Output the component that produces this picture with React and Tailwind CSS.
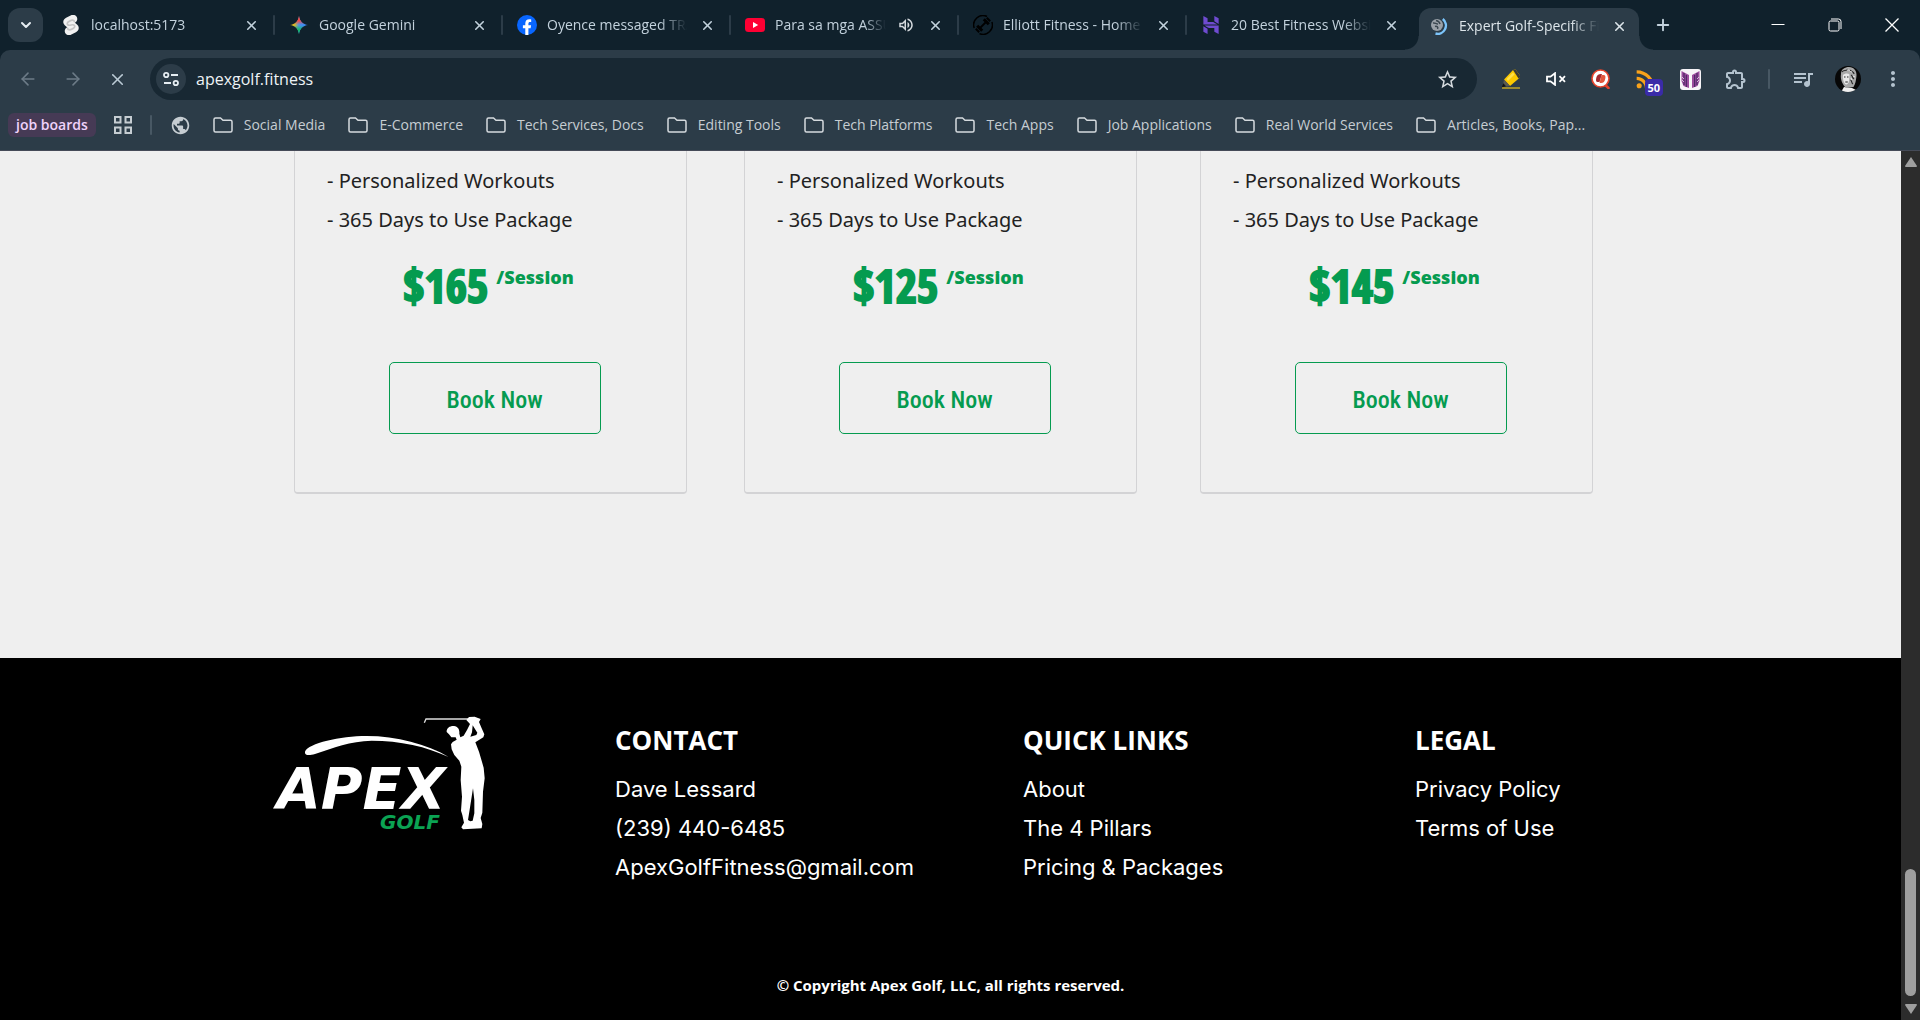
import React from 'react';
import { SiHostinger } from 'react-icons/si';
import { MdStarBorder, MdOutlineExtension, MdQueueMusic, MdPublic, MdMoreVert, MdRssFeed, MdOutlineVolumeUp } from 'react-icons/md';
import { ArrowLeft, ArrowRight, X, Plus, ChevronDown } from 'lucide-react';

const SvelteIcon = () => (
  <svg viewBox="0 0 18 20" className="h-5 w-[18px]" fill="none" strokeLinecap="round" aria-hidden="true">
    <path d="M6 6.500L11 4M7 16L12 13.500M5.500 7L12.500 13" stroke="#f1f1f1" strokeWidth="8.500" />
    <path d="M12.500 6.500C11.500 4.500 9.500 4.800 6.500 6.800C4 8.500 5.500 11 9 10C12.500 9 14 11.500 11.500 13.200C8.500 15.200 6.500 15.500 5.500 13.500" stroke="#c4c4c4" strokeWidth="1.700" />
  </svg>
);

const GeminiIcon = () => (
  <svg viewBox="0 0 18 18" className="size-[18px]" aria-hidden="true">
    <defs>
      <linearGradient id="gem" x1="0" y1="0.45" x2="1" y2="0.55">
        <stop offset="0" stopColor="#fbbc04" />
        <stop offset="0.25" stopColor="#d9bd2c" />
        <stop offset="0.5" stopColor="#4a90e8" />
        <stop offset="1" stopColor="#3186ff" />
      </linearGradient>
      <linearGradient id="gemv" x1="0" y1="0" x2="0" y2="1">
        <stop offset="0" stopColor="#ff4641" />
        <stop offset="0.25" stopColor="#ff4641" />
        <stop offset="0.48" stopColor="#ff4641" stopOpacity="0" />
        <stop offset="0.52" stopColor="#14bb69" stopOpacity="0" />
        <stop offset="0.75" stopColor="#14bb69" />
      </linearGradient>
    </defs>
    <path d="M9 0C9.600 5 13 8.400 18 9C13 9.600 9.600 13 9 18C8.400 13 5 9.600 0 9C5 8.400 8.400 5 9 0Z" fill="url(#gem)" />
    <path d="M9 0C9.600 5 13 8.400 18 9C13 9.600 9.600 13 9 18C8.400 13 5 9.600 0 9C5 8.400 8.400 5 9 0Z" fill="url(#gemv)" />
  </svg>
);

const FacebookIcon = () => (
  <svg viewBox="0 0 20 20" className="size-5" aria-hidden="true">
    <circle cx="10" cy="10" r="10" fill="#0866ff" />
    <path d="M8.300 20V13.200H5.900V10.200H8.300V8.600C8.300 5.700 9.700 4.200 12.400 4.200C13 4.200 13.800 4.300 14.200 4.400V7C13.900 6.950 13.400 6.950 13 6.950C11.900 6.950 11.400 7.400 11.400 8.700V10.200H14.100L13.600 13.200H11.400V20Z" fill="#fff" />
  </svg>
);

const YoutubeIcon = () => (
  <svg viewBox="0 0 20 14" className="h-3.5 w-5" aria-hidden="true">
    <rect width="20" height="14" rx="3.500" fill="#ff0033" />
    <path d="M8 4L13.200 7L8 10Z" fill="#fff" />
  </svg>
);

const DumbbellIcon = () => (
  <svg viewBox="0 0 20 20" className="size-5" fill="none" stroke="#000" aria-hidden="true">
    <path d="M14 1.500A9.300 9.300 0 0 0 1.200 13M18.900 7A9.300 9.300 0 0 1 6.500 18.600" strokeWidth="1.500" />
    <path d="M6.500 13.500L13.500 6.500" strokeWidth="1.800" />
    <path d="M4.200 10.800L9.200 15.800M10.800 4.200L15.800 9.200" strokeWidth="3" />
    <path d="M2.800 13.800L6.200 17.200M13.800 2.800L17.200 6.200" strokeWidth="2" />
  </svg>
);

const LoadingIcon = () => (
  <svg viewBox="0 0 18 18" className="size-[18px]" aria-hidden="true">
    <circle cx="7" cy="8" r="6" fill="#9aa1a8" />
    <path d="M3 6C5 5.500 6 7 8 7M6 3.500C8 4 9.500 4.500 10 7M5 9.500C7 9 8.500 10 7.500 12" stroke="#3a464f" strokeWidth="1.500" fill="none" />
    <path d="M12.800 2A8.300 8.300 0 0 1 5.500 16.500" stroke="#7cc4fa" strokeWidth="2.400" fill="none" />
  </svg>
);

const TABS = [
  { title: 'localhost:5173', icon: <SvelteIcon />, sep: true },
  { title: 'Google Gemini', icon: <GeminiIcon />, sep: true },
  { title: 'Oyence messaged TRAINING', icon: <FacebookIcon />, sep: true },
  { title: 'Para sa mga ASSUMERA', icon: <YoutubeIcon />, sep: true, audio: true },
  { title: 'Elliott Fitness - Home Page', icon: <DumbbellIcon />, sep: true },
  { title: '20 Best Fitness Website', icon: <SiHostinger className="size-[18px] text-[#6f4bd0]" /> },
];

const BOOKMARKS = [
  'Social Media', 'E-Commerce', 'Tech Services, Docs', 'Editing Tools', 'Tech Platforms',
  'Tech Apps', 'Job Applications', 'Real World Services', 'Articles, Books, Pap...',
];

function TabBody({ title, icon, audio }) {
  return (
    <>
      <span className="flex w-[18px] shrink-0 items-center justify-center [&>svg]:shrink-0">{icon}</span>
      <span className="min-w-0 flex-1 overflow-hidden whitespace-nowrap text-left [mask-image:linear-gradient(to_right,#000_80%,transparent)]">{title}</span>
      {audio && <MdOutlineVolumeUp className="size-[18px] shrink-0 text-[#d5dade]" />}
      <button type="button" aria-label={`Close ${title}`} className="flex w-[18px] shrink-0 justify-center">
        <X className="size-[15px]" strokeWidth={2.500} />
      </button>
    </>
  );
}

function TabStrip() {
  return (
    <div className="flex h-[50px] bg-[#10212c] text-sm text-[#c3d2dd]">
      <button type="button" aria-label="Search tabs" className="mt-2 ml-2 flex h-[34px] w-[35px] shrink-0 items-center justify-center rounded-xl bg-[#2c3c48] text-[#e6edf2]">
        <ChevronDown className="size-4" strokeWidth={3} />
      </button>
      <div className="ml-1 grid min-w-0 max-w-[1596px] flex-1 grid-cols-7">
        {TABS.map((t) => (
          <div key={t.title} className="flex min-w-0 items-center">
            <div className="flex min-w-0 flex-1 items-center gap-[11px] pl-[15px] pr-[13px]"><TabBody {...t} /></div>
            <span className={t.sep ? 'h-5 w-0.5 rounded bg-[#2c3c48]' : 'w-0.5'} />
          </div>
        ))}
        <div className="flex min-w-0 items-end px-1">
          <div className="relative flex h-[42px] min-w-0 flex-1 items-center gap-[11px] rounded-t-xl bg-[#2c3c48] px-[11px] pb-1.5 text-[#dde5ea]">
            <span className="absolute -left-3.5 bottom-0 size-3.5 bg-[radial-gradient(circle_at_0_0,transparent_13px,#2c3c48_14px)]" />
            <span className="absolute -right-3.5 bottom-0 size-3.5 bg-[radial-gradient(circle_at_100%_0,transparent_13px,#2c3c48_14px)]" />
            <TabBody title="Expert Golf-Specific Fitness" icon={<LoadingIcon />} />
          </div>
        </div>
      </div>
      <button type="button" aria-label="New tab" className="ml-2 flex w-6 shrink-0 items-center justify-center">
        <Plus className="size-[18px]" strokeWidth={2.500} />
      </button>
      <div className="ml-auto flex shrink-0 text-white">
        <button type="button" aria-label="Minimize" className="flex w-[57px] items-center justify-center">
          <svg viewBox="0 0 14 14" className="size-3.5" stroke="currentColor"><path d="M0.500 6.500H13.500" /></svg>
        </button>
        <button type="button" aria-label="Restore" className="flex w-[57px] items-center justify-center">
          <svg viewBox="0 0 14 14" className="size-3.5" fill="none" stroke="currentColor">
            <rect x="1" y="3" width="10" height="10" rx="1.500" />
            <path d="M3 1H10.500A2.500 2.500 0 0 1 13 3.500V11" />
          </svg>
        </button>
        <button type="button" aria-label="Close window" className="flex w-[57px] items-center justify-center">
          <svg viewBox="0 0 14 14" className="size-3.5" stroke="currentColor" strokeWidth="1.300"><path d="M0.500 0.500L13.500 13.500M13.500 0.500L0.500 13.500" /></svg>
        </button>
      </div>
    </div>
  );
}

const ToolButton = ({ label, children }) => (
  <button type="button" aria-label={label} className="flex w-[45px] shrink-0 items-center justify-center">{children}</button>
);

function Toolbar() {
  return (
    <div className="flex h-[50px] rounded-t-[10px] bg-[#2c3c48] px-[5px] pt-2 text-[#b4c3cf]">
      <div className="flex shrink-0 text-[#6c7b87]">
        <ToolButton label="Back"><ArrowLeft className="size-5" strokeWidth={1.900} /></ToolButton>
        <ToolButton label="Forward"><ArrowRight className="size-5" strokeWidth={1.900} /></ToolButton>
        <ToolButton label="Stop loading"><X className="size-[19px] text-[#bccbd6]" strokeWidth={2} /></ToolButton>
      </div>
      <div className="ml-2.5 flex h-[42px] min-w-0 flex-1 items-center rounded-full bg-[#182833] pr-[18px] pl-1.5">
        <button type="button" aria-label="Site information" className="flex size-[30px] shrink-0 items-center justify-center rounded-full bg-[#2c3c48] text-[#e6edf2]">
          <svg viewBox="0 0 16 16" className="size-4" fill="none" stroke="currentColor" strokeWidth="1.800">
            <circle cx="3.200" cy="4" r="2.200" /><path d="M8 4H15M1 12H8" /><circle cx="12.800" cy="12" r="2.200" />
          </svg>
        </button>
        <input aria-label="Address" defaultValue="apexgolf.fitness" className="ml-2.5 min-w-0 flex-1 bg-transparent text-base text-[#eef3f6] outline-none" />
        <button type="button" aria-label="Bookmark this page"><MdStarBorder className="size-[23px] text-[#d5dade]" /></button>
      </div>
      <div className="ml-[11px] flex shrink-0">
        <ToolButton label="Highlighter">
          <svg viewBox="0 0 20 20" className="size-5">
            <path d="M1 19H19" stroke="#d9b521" strokeWidth="1.300" />
            <path d="M3 10.500L12 1L14.500 0.600L19 6.500V8.500L9 17Z" fill="#fcc900" />
            <path d="M12 1L14.500 0.600L19 6.500V8.500L17.500 9.500Z" fill="#3a3a34" />
            <path d="M5.500 10L12 3.500L13.500 5.500L7 12Z" fill="#ffe04a" />
            <path d="M3 10.500L9 17L5.500 17.500L2.300 14Z" fill="#5c5a50" />
            <path d="M2.300 14.500L4.600 17.300L0.800 18.300Z" fill="#111" />
          </svg>
        </ToolButton>
        <ToolButton label="Mute tab">
          <svg viewBox="0 0 20 14" className="h-3.5 w-5" fill="none" stroke="#fff" strokeWidth="1.800">
            <path d="M1 4.700H4.500L9 1.200V12.800L4.500 9.300H1Z" /><path d="M13.500 4.200L19 9.800M19 4.200L13.500 9.800" />
          </svg>
        </ToolButton>
        <ToolButton label="Page search">
          <svg viewBox="0 0 20 20" className="size-5">
            <path d="M13 15L17.500 19" stroke="#e8442c" strokeWidth="2.600" strokeLinecap="round" />
            <circle cx="9.500" cy="9.500" r="8.500" fill="#fff" stroke="#e8442c" strokeWidth="1.600" />
            <path d="M5.500 8C6 6 8 5 9.800 5H11L8.500 13H6.500C5 13 4.500 11.500 5.500 8Z" fill="#a52a30" />
            <path d="M10.500 6H12.500C14.500 6 14.700 7.500 14.300 9.500C13.800 12.500 12.500 14 10 14H8.500Z" fill="#e4573c" />
          </svg>
        </ToolButton>
        <ToolButton label="Feed, 50 unread">
          <span className="relative flex size-6 items-center justify-center">
            <MdRssFeed className="size-7 shrink-0 text-[#f9a21a]" />
            <span className="absolute top-3 left-[11px] rounded bg-[#3a2ba8] px-[3px] text-[11px] leading-[17px] font-bold text-white">50</span>
          </span>
        </ToolButton>
        <ToolButton label="Reader">
          <svg viewBox="0 0 21 21" className="size-[21px]">
            <rect width="21" height="21" rx="3" fill="#f7f4f8" />
            <path d="M1.500 2L9 6V19L3.500 17L1.500 12Z" fill="#9a4a9c" /><path d="M19.500 2L12 6V19L17.500 17L19.500 12Z" fill="#9a4a9c" />
            <path d="M4 4V16M6.300 6V18M17 4V16M14.700 6V18" stroke="#42215e" strokeWidth="1.100" />
            <path d="M2 8L4 10M2 11L4 13M19 8L17 10M19 11L17 13" stroke="#f7f4f8" strokeWidth="0.700" />
          </svg>
        </ToolButton>
        <ToolButton label="Extensions"><MdOutlineExtension className="size-6" /></ToolButton>
        <span className="mx-2.5 h-5 w-0.5 self-center rounded bg-[#485864]" />
        <ToolButton label="Media controls"><MdQueueMusic className="size-6" /></ToolButton>
        <ToolButton label="Profile">
          <svg viewBox="0 0 26 26" className="size-[26px]">
            <defs><clipPath id="av"><circle cx="13" cy="13" r="13" /></clipPath></defs>
            <g clipPath="url(#av)">
              <rect width="26" height="26" fill="#070707" />
              <path d="M6 26L9 21L17 22L21 24V26Z" fill="#f0f0f0" />
              <path d="M6 8C6 3 10 1 14 1C19 1 22 5 21.500 10C21 14 20.500 18 18.500 21L11 22C8 19 5 14 6 8Z" fill="#a8a8a8" />
              <path d="M8 9C10 7 13 7 14.500 8.500L14 15C13.500 18 11.500 19 10 18C8.500 16 7.500 12 8 9Z" fill="#e8e8e8" />
              <path d="M7 6C9 3 11 6 13 3M15 4C16 6 19 5 19 8M16 9C18 10 17 12 19 13M15.500 14C17.500 15 16 17 18 18M9 11H10.500M12 11H13.500M10.300 16H12.800" stroke="#262626" strokeWidth="1.200" fill="none" />
              <path d="M12 4C14 3 15 6 17 6M18 10L20 11M16 12L17 14" stroke="#f2f2f2" strokeWidth="0.900" fill="none" />
            </g>
          </svg>
        </ToolButton>
        <ToolButton label="Menu"><MdMoreVert className="size-6" /></ToolButton>
      </div>
    </div>
  );
}

function BookmarksBar() {
  return (
    <div className="flex h-[51px] items-center border-b border-[#454a57] bg-[#2c3c48] pl-2 text-sm text-[#c6cdd2]">
      <button type="button" className="rounded-md bg-[#463a55] px-2 leading-6 font-semibold text-[#efd3fb]">job boards</button>
      <button type="button" aria-label="Apps" className="ml-[18px]">
        <svg viewBox="0 0 18 18" className="size-[18px]" fill="none" stroke="currentColor" strokeWidth="2">
          <rect x="1" y="1" width="5.500" height="5.500" /><rect x="11.500" y="1" width="5.500" height="5.500" />
          <rect x="1" y="11.500" width="5.500" height="5.500" /><rect x="11.500" y="11.500" width="5.500" height="5.500" />
        </svg>
      </button>
      <span className="ml-[18px] h-5 w-0.5 rounded bg-[#485864]" />
      <button type="button" aria-label="Web page" className="ml-[18px]"><MdPublic className="size-[21px]" /></button>
      <div className="ml-[22px] flex gap-[23px]">
        {BOOKMARKS.map((b) => (
          <button type="button" key={b} className="flex items-center gap-[11px] whitespace-nowrap">
            <svg viewBox="0 0 20 16" className="h-4 w-5" fill="none" stroke="#d5dade" strokeWidth="1.500">
              <path d="M1 13.500V2.500Q1 1 2.500 1H7.500L10 3.300H17.500Q19 3.300 19 4.800V13.500Q19 15 17.500 15H2.500Q1 15 1 13.500Z" />
            </svg>
            {b}
          </button>
        ))}
      </div>
    </div>
  );
}

const PriceCard = ({ price }) => (
  <article className="flex w-full max-w-[393px] flex-col rounded-b border border-t-0 border-b-2 border-[#d3d3d5] px-8 pt-2.5 pb-[58px]">
    <ul className="font-['Noto_Sans',sans-serif] text-xl leading-[39px] whitespace-nowrap text-[#222]">
      <li>- Personalized Workouts</li>
      <li>- 365 Days to Use Package</li>
    </ul>
    <p className="mt-4 flex items-start justify-center gap-2 pr-1 font-extrabold text-[#059b50]">
      <span className="font-['Open_Sans_Condensed','Open_Sans',sans-serif] text-[46px] leading-[60px] [-webkit-text-stroke:2px_#059b50]">{price}</span>
      <span className="text-lg leading-[44px]">/Session</span>
    </p>
    <button type="button" className="mt-[47px] ml-2 h-[72px] w-[212px] self-center rounded-[5px] border border-[#059b50] pt-1 font-['Roboto_Condensed',sans-serif] text-2xl font-medium text-[#059b50]">Book Now</button>
  </article>
);

const Logo = () => (
  <svg viewBox="0 0 720 420" className="h-[140px] w-[240px]" role="img" aria-label="Apex Golf">
    <path d="M135 155C145 130 240 108 320 108C410 108 500 132 566 171C500 140 420 122 335 122C270 124 220 143 165 162C145 168 133 166 135 155Z" fill="#fff" />
    <text x="50" y="328" className="font-['DejaVu_Sans',sans-serif] text-[171px] font-bold italic" fill="#fff">APEX</text>
    <text x="360" y="388" className="font-['DejaVu_Sans',sans-serif] text-[60px] font-bold italic" fill="#0ba353">GOLF</text>
    <path d="M493 68L498 57H625" stroke="#ddd" strokeWidth="4" fill="none" />
    <path d="M560 96C559 84 570 77 582 78C595 80 599 89 598 101L601 112L611 107L621 90L630 72L619 60L627 51L644 50L662 57L657 66L665 85L673 103L670 112L646 127L657 155L671 203L674 235L669 275L667 338L662 354L667 372L665 385L609 388L604 382L612 368L607 345L603 332L606 290L602 240L604 200L598 182L583 165L575 148L573 133L578 126L590 119L587 112L574 112L567 103Z" fill="#fff" />
    <path d="M638 76L652 98L649 105L631 110L636 97Z" fill="#000" />
    <path d="M639 265L643 300L643 340L638 362L631 364L624 360L628 335Z" fill="#000" />
  </svg>
);

const FooterColumn = ({ title, items }) => (
  <section className="pt-5">
    <h2 className="text-[26px] leading-10 font-bold">{title}</h2>
    <ul className="mt-2.5 font-['Inter',sans-serif] text-[22px] leading-[39px]">
      {items.map((i) => <li key={i}><a href="#top">{i}</a></li>)}
    </ul>
  </section>
);

export default function App() {
  return (
    <div id="top" className="flex min-h-screen flex-col font-['Open_Sans','Noto_Sans',sans-serif]">
      <header className="bg-[#10212c]">
        <TabStrip />
        <Toolbar />
        <BookmarksBar />
      </header>
      <div className="flex flex-1">
        <div className="flex min-w-0 flex-1 flex-col">
          <main className="grid flex-1 grid-cols-[450fr_456fr_393fr] items-start bg-[#efefef] pr-[308px] pb-40 pl-[294px]">
            {['$165', '$125', '$145'].map((p) => <PriceCard key={p} price={p} />)}
          </main>
          <footer className="bg-black pb-[23px] text-white">
            <div className="grid grid-cols-[355fr_408fr_392fr_226fr] pt-[42px] pr-[260px] pl-[260px]">
              <Logo />
              <FooterColumn title="CONTACT" items={['Dave Lessard', '(239) 440-6485', 'ApexGolfFitness@gmail.com']} />
              <FooterColumn title="QUICK LINKS" items={['About', 'The 4 Pillars', 'Pricing & Packages']} />
              <FooterColumn title="LEGAL" items={['Privacy Policy', 'Terms of Use']} />
            </div>
            <p className="mt-[86px] text-center text-[15px] leading-6 font-bold">© Copyright Apex Golf, LLC, all rights reserved.</p>
          </footer>
        </div>
        <div className="flex w-[19px] shrink-0 flex-col items-center bg-[#2c2c2c] py-1.5" aria-hidden="true">
          <svg viewBox="0 0 12 10" className="h-2.5 w-3" fill="#9f9f9f"><path d="M6 0L12 9Q12 10 11 10H1Q0 10 0 9Z" /></svg>
          <span className="mt-auto h-[127px] w-[11px] rounded-full bg-[#9f9f9f]" />
          <svg viewBox="0 0 12 10" className="mt-2 h-2.5 w-3" fill="#9f9f9f"><path d="M6 10L12 1Q12 0 11 0H1Q0 0 0 1Z" /></svg>
        </div>
      </div>
    </div>
  );
}
